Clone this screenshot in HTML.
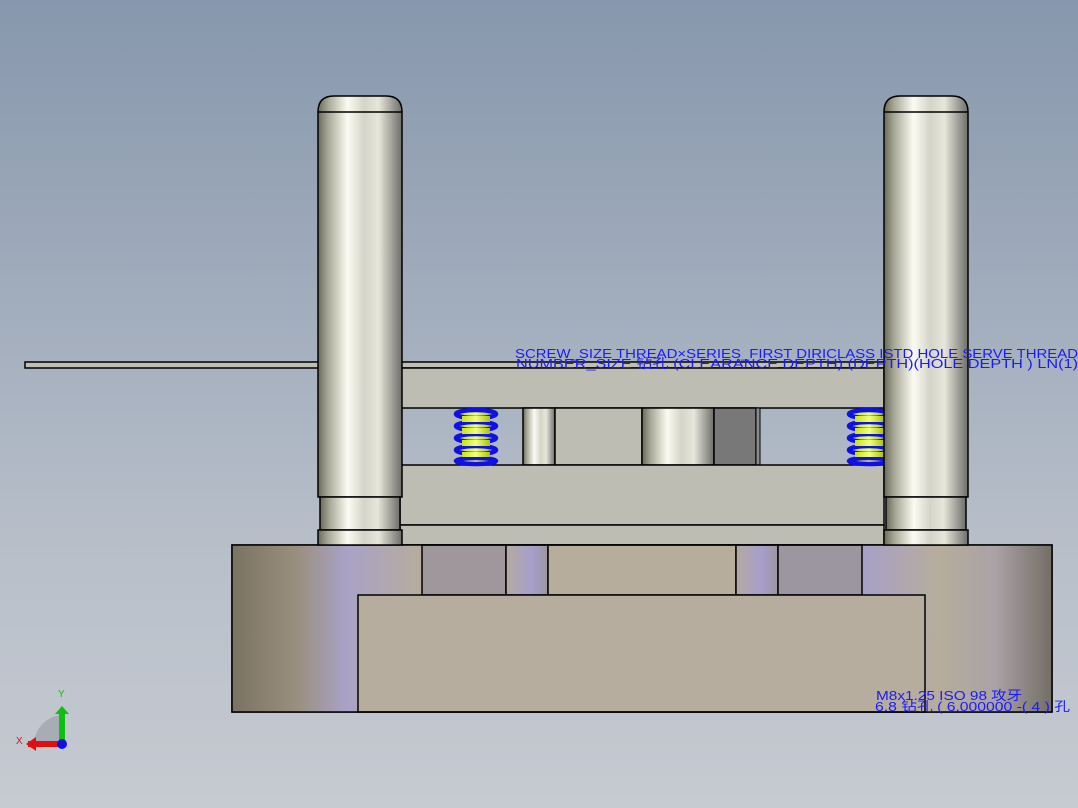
<!DOCTYPE html>
<html><head><meta charset="utf-8"><style>
html,body{margin:0;padding:0;width:1078px;height:808px;overflow:hidden}
body{background:linear-gradient(#8797ad,#b9c0ca 70%,#c6cad1)}
svg{position:absolute;left:0;top:0}
text{font-family:"Liberation Sans","Noto Sans CJK SC",sans-serif;fill:#1a1aff;font-size:13px}
</style></head><body>
<svg width="1078" height="808" viewBox="0 0 1078 808">
<defs>
<linearGradient id="cyl" x1="0" x2="1">
<stop offset="0" stop-color="#6a6a5c"/><stop offset=".12" stop-color="#a8a898"/><stop offset=".35" stop-color="#fbfbf2"/><stop offset=".55" stop-color="#d4d4c8"/><stop offset=".72" stop-color="#e6e6da"/><stop offset="1" stop-color="#6e6e6a"/>
</linearGradient>
<linearGradient id="baseL" x1="0" x2="1">
<stop offset="0" stop-color="#7a7262"/><stop offset=".35" stop-color="#9a9080"/><stop offset=".6" stop-color="#a9a2c6"/><stop offset="1" stop-color="#b6ad9e"/>
</linearGradient>
<linearGradient id="baseR" x1="0" x2="1">
<stop offset="0" stop-color="#a7a0c8"/><stop offset=".4" stop-color="#b6ad9c"/><stop offset=".7" stop-color="#aaa2a6"/><stop offset="1" stop-color="#746e66"/>
</linearGradient>
<linearGradient id="stripe" x1="0" x2="1">
<stop offset="0" stop-color="#b4aaa0"/><stop offset=".6" stop-color="#a79fcc"/><stop offset="1" stop-color="#9c96a0"/>
</linearGradient>
<linearGradient id="spr" x1="0" x2="1"><stop offset="0" stop-color="#c8e020"/><stop offset=".5" stop-color="#f0ff80"/><stop offset="1" stop-color="#a8c010"/></linearGradient>
</defs>
<g stroke="#000" stroke-width="1.5">
<rect x="25" y="362" width="860" height="6" fill="#c0bfb5"/>
<rect x="400" y="368" width="484" height="40" fill="#bebdb3"/>
<rect x="523" y="408" width="32" height="57" fill="url(#cyl)"/>
<rect x="555" y="408" width="87" height="57" fill="#bebdb3"/>
<rect x="642" y="408" width="72" height="57" fill="url(#cyl)"/>
<rect x="714" y="408" width="42" height="57" fill="#787878"/>
<rect x="756" y="408" width="4" height="57" fill="#8a8a88" stroke-width="1"/>
<rect x="400" y="465" width="484" height="60" fill="#bebdb3"/>
<rect x="400" y="525" width="484" height="20" fill="#bebdb3"/>
<rect x="232" y="545" width="820" height="167" fill="#b6ad9e"/>
<rect x="232" y="545" width="190" height="167" fill="url(#baseL)" stroke="none"/>
<rect x="862" y="545" width="190" height="167" fill="url(#baseR)" stroke="none"/>
<rect x="422" y="545" width="84" height="50" fill="#9f979b"/>
<rect x="506" y="545" width="42" height="50" fill="url(#stripe)"/>
<rect x="548" y="545" width="188" height="50" fill="#b6ad9c"/>
<rect x="736" y="545" width="42" height="50" fill="url(#stripe)"/>
<rect x="778" y="545" width="84" height="50" fill="#9c96a0"/>
<rect x="358" y="595" width="567" height="117" fill="#b6ad9e"/>
<rect x="232" y="545" width="820" height="167" fill="none"/>
</g>
<!-- springs -->
<g>
<rect x="462" y="409" width="28" height="55" fill="url(#spr)"/>
<g fill="none" stroke="#1010e0" stroke-width="4.5">
<ellipse cx="476" cy="414" rx="20" ry="4"/>
<ellipse cx="476" cy="426" rx="20" ry="4"/>
<ellipse cx="476" cy="438" rx="20" ry="4"/>
<ellipse cx="476" cy="450" rx="20" ry="4"/>
<ellipse cx="476" cy="461" rx="20" ry="3"/>
</g>
<rect x="462" y="416" width="28" height="6" fill="url(#spr)"/>
<rect x="462" y="428" width="28" height="6" fill="url(#spr)"/>
<rect x="462" y="440" width="28" height="6" fill="url(#spr)"/>
<rect x="462" y="452" width="28" height="5" fill="url(#spr)"/>
<rect x="855" y="409" width="28" height="55" fill="url(#spr)"/>
<g fill="none" stroke="#1010e0" stroke-width="4.5">
<ellipse cx="869" cy="414" rx="20" ry="4"/>
<ellipse cx="869" cy="426" rx="20" ry="4"/>
<ellipse cx="869" cy="438" rx="20" ry="4"/>
<ellipse cx="869" cy="450" rx="20" ry="4"/>
<ellipse cx="869" cy="461" rx="20" ry="3"/>
</g>
<rect x="855" y="416" width="29" height="6" fill="url(#spr)"/>
<rect x="855" y="428" width="29" height="6" fill="url(#spr)"/>
<rect x="855" y="440" width="29" height="6" fill="url(#spr)"/>
<rect x="855" y="452" width="29" height="5" fill="url(#spr)"/>
</g>
<!-- pillars -->
<g stroke="#000" stroke-width="1.5" fill="url(#cyl)">
<path d="M318 497 V112 Q318 96 334 96 H386 Q402 96 402 112 V497 Z"/>
<line x1="318" y1="112" x2="402" y2="112"/>
<rect x="320" y="497" width="80" height="33"/>
<rect x="318" y="530" width="84" height="15"/>
<path d="M884 497 V112 Q884 96 900 96 H952 Q968 96 968 112 V497 Z"/>
<line x1="884" y1="112" x2="968" y2="112"/>
<rect x="886" y="497" width="80" height="33"/>
<rect x="884" y="530" width="84" height="15"/>
</g>
<text x="515" y="358" textLength="563" lengthAdjust="spacingAndGlyphs">SCREW_SIZE THREAD×SERIES_FIRST DIRICLASS ISTD HOLE SERVE THREAD</text>
<text x="516" y="368" textLength="562" lengthAdjust="spacingAndGlyphs">NUMBER_SIZE 钻孔 (CLEARANCE DEPTH) (DEPTH)(HOLE DEPTH ) LN(1)</text>
<text x="876" y="700" textLength="146" lengthAdjust="spacingAndGlyphs">M8x1.25 ISO 98 攻牙</text>
<text x="875" y="711" textLength="195" lengthAdjust="spacingAndGlyphs">6.8 钻孔 ( 6.000000 -( 4 ) 孔</text>
<path d="M62 744 V715 A30 30 0 0 0 34 744 Z" fill="#a8acb4"/>
<rect x="28" y="741" width="34" height="6" fill="#e01010"/>
<path d="M26 744 L36 737 V751 Z" fill="#e01010"/>
<rect x="59" y="712" width="6" height="32" fill="#10c010"/>
<path d="M62 706 L55 714 H69 Z" fill="#10c010"/>
<circle cx="62" cy="744" r="5" fill="#1010e0"/>
<text x="58" y="697" style="fill:#10c010;font-size:10px">Y</text>
<text x="16" y="744" style="fill:#e01010;font-size:10px">X</text>
</svg>
</body></html>
